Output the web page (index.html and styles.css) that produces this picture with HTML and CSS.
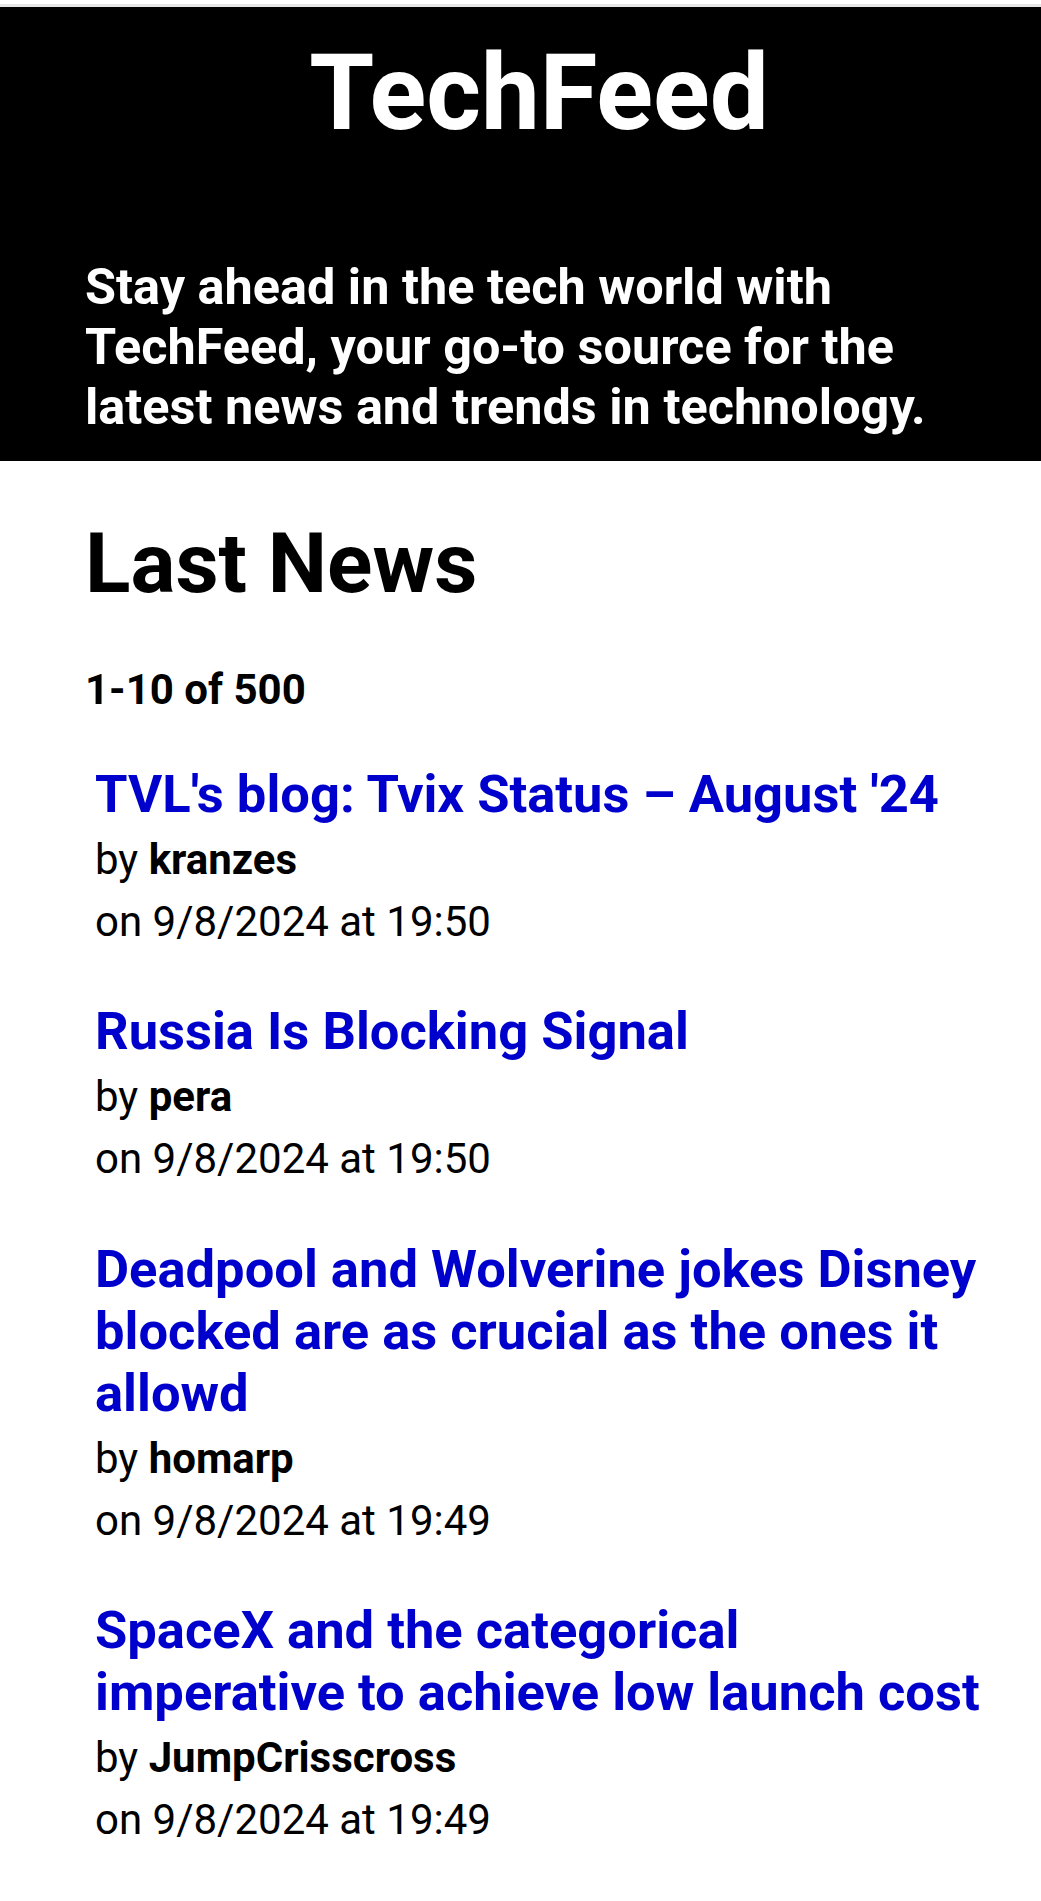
FILE: index.html
```html
<!DOCTYPE html>
<html lang="en">
<head>
<meta charset="utf-8">
<title>TechFeed</title>
<link rel="stylesheet" href="styles.css">
</head>
<body>
<div class="topline"></div>
<header class="hero">
  <div class="container">
    <h1 class="brand">TechFeed</h1>
    <p class="tagline">Stay ahead in the tech world with TechFeed, your go-to source for the latest news and trends in technology.</p>
  </div>
</header>
<main class="container">
  <h2 class="section-title">Last News</h2>
  <p class="count">1-10 of 500</p>
  <ul class="news">
    <li class="item">
      <a class="item-title" href="#">TVL's blog: Tvix Status – August '24</a>
      <div class="meta">by <b>kranzes</b></div>
      <div class="meta">on 9/8/2024 at 19:50</div>
    </li>
    <li class="item">
      <a class="item-title" href="#">Russia Is Blocking Signal</a>
      <div class="meta">by <b>pera</b></div>
      <div class="meta">on 9/8/2024 at 19:50</div>
    </li>
    <li class="item">
      <a class="item-title" href="#">Deadpool and Wolverine jokes Disney blocked are as crucial as the ones it allowd</a>
      <div class="meta">by <b>homarp</b></div>
      <div class="meta">on 9/8/2024 at 19:49</div>
    </li>
    <li class="item">
      <a class="item-title" href="#">SpaceX and the categorical imperative to achieve low launch cost</a>
      <div class="meta">by <b>JumpCrisscross</b></div>
      <div class="meta">on 9/8/2024 at 19:49</div>
    </li>
  </ul>
</main>
</body>
</html>
```

FILE: styles.css
```css
html, body {
  margin: 0;
  padding: 0;
  background: #ffffff;
  color: #000000;
  font-family: Roboto, "Liberation Sans", Arial, sans-serif;
}

.topline {
  height: 3px;
  margin-top: 4px;
  background: #e6e6e6;
}

.container {
  padding: 0 48px 0 85px;
}

.hero {
  background: #000000;
  color: #ffffff;
  padding: 24.6px 0 24px;
}

.brand {
  margin: 0;
  font-size: 105px;
  line-height: 123px;
  font-weight: 700;
  text-align: center;
}

.tagline {
  margin: 102.4px 0 0;
  font-size: 50.4px;
  line-height: 60px;
  font-weight: 700;
}

.section-title {
  margin: 53px 0 0;
  font-size: 84px;
  line-height: 100.8px;
  font-weight: 700;
}

.count {
  margin: 50px 0 0;
  font-size: 42px;
  line-height: 49.2px;
  font-weight: 700;
}

.news {
  list-style: none;
  margin: 49px 0 0;
  padding: 0 0 0 10px;
  display: flex;
  flex-direction: column;
  gap: 47.5px;
}

.item {
  display: flex;
  flex-direction: column;
}

.item-title {
  display: block;
  color: #0000cc;
  text-decoration: none;
  font-size: 52.5px;
  line-height: 62px;
  font-weight: 700;
  margin-bottom: 4px;
}

.meta {
  font-size: 42px;
  line-height: 62px;
  font-weight: 400;
}

.meta b {
  font-weight: 700;
}
```
